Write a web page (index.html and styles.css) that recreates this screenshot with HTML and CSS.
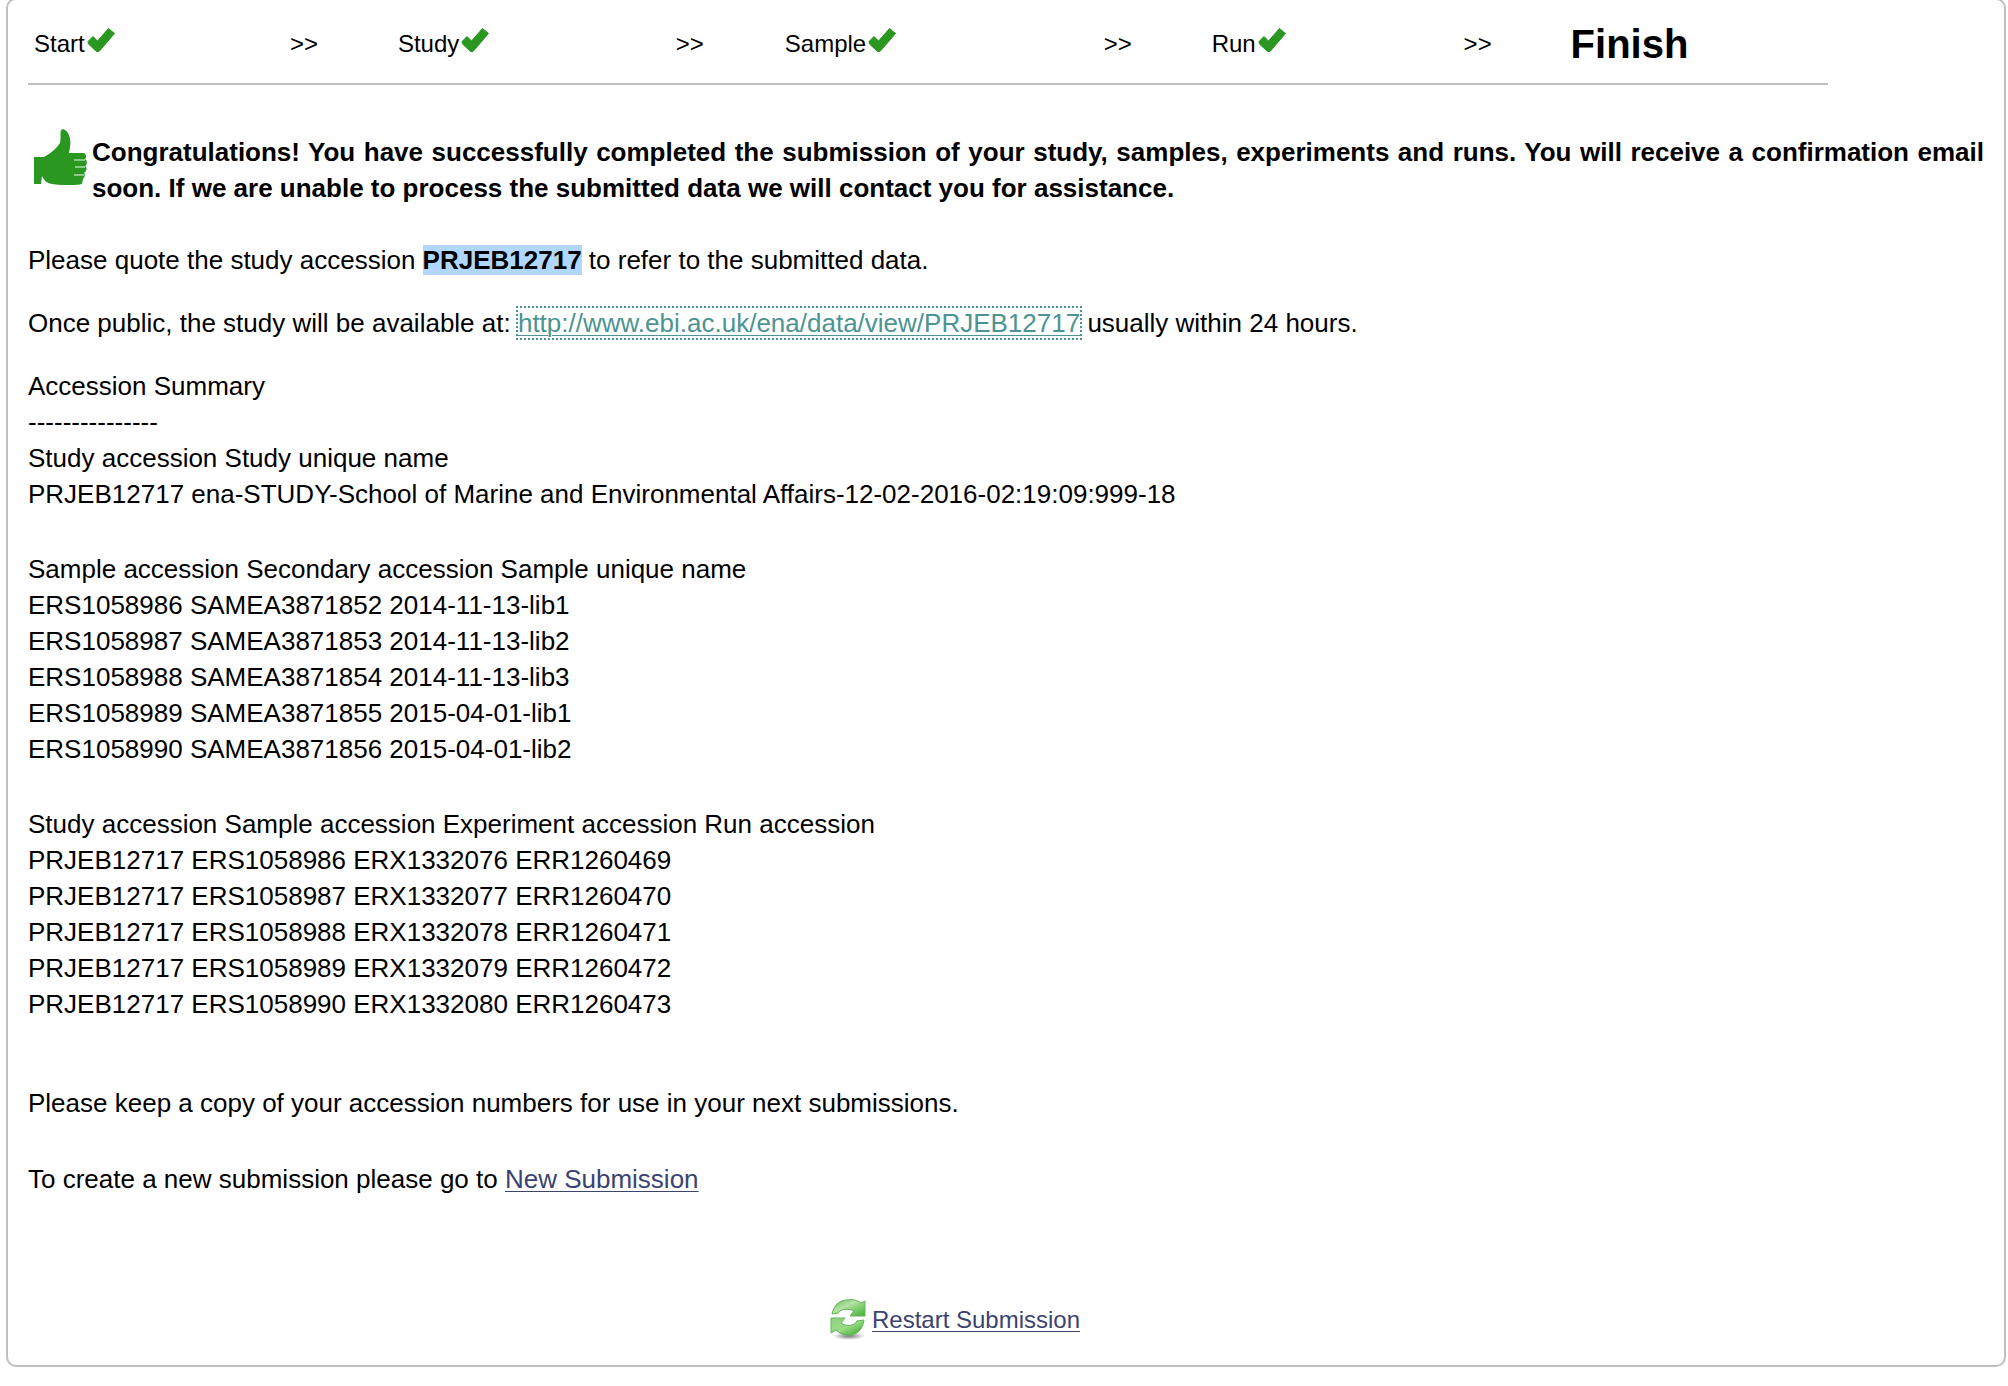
FILE: index.html
```html
<!DOCTYPE html>
<html lang="en">
<head>
<meta charset="utf-8">
<title>Submission complete</title>
<link rel="stylesheet" href="styles.css">
</head>
<body>
<svg class="sprite" aria-hidden="true">
  <symbol id="tick" viewBox="0 0 28 24">
    <path d="M1 13.500 L6 8.500 L10.500 13 L21.500 0.500 L27.500 5.500 L12 23.500 H9.500 L1.500 16 Z" fill="#2a9720" stroke="#2a9720" stroke-linejoin="round"/>
  </symbol>
</svg>
<main class="panel">
  <ol class="steps">
    <li>Start<svg class="tick" role="img" aria-label="done"><use href="#tick"/></svg></li>
    <li aria-hidden="true">&gt;&gt;</li>
    <li>Study<svg class="tick" role="img" aria-label="done"><use href="#tick"/></svg></li>
    <li aria-hidden="true">&gt;&gt;</li>
    <li>Sample<svg class="tick" role="img" aria-label="done"><use href="#tick"/></svg></li>
    <li aria-hidden="true">&gt;&gt;</li>
    <li>Run<svg class="tick" role="img" aria-label="done"><use href="#tick"/></svg></li>
    <li aria-hidden="true">&gt;&gt;</li>
    <li class="current" aria-current="step">Finish</li>
  </ol>

  <div class="congrats">
    <svg class="thumb" viewBox="0 0 53 56" aria-hidden="true">
      <path d="M0 28 H10 C17 24 22 20 26 14 C27 10 26 4 27 1 C29 -1 32 1 34 4 C36 8 37 12 36 18 L35 24 H49 C52 24 53 28 51 30 C54 32 53 36 51 37 C54 39 52 43 50 44 C52 46 50 49 49 50 L48 55 C38 57 23 56 18 55 C12 54 10 51 8 47 L7 55 H0 Z" fill="#2a9720"/>
      <path d="M40 31 H51 M41 38 H51 M40 46 H50" stroke="#8cc888" stroke-width="2"/>
    </svg>
    <p>Congratulations! You have successfully completed the submission of your study, samples, experiments and runs. You will receive a confirmation email soon. If we are unable to process the submitted data we will contact you for assistance.</p>
  </div>

  <p class="quote">Please quote the study accession <mark>PRJEB12717</mark> to refer to the submitted data.</p>
  <p class="public">Once public, the study will be available at: <a class="study-link" href="http://www.ebi.ac.uk/ena/data/view/PRJEB12717">http://www.ebi.ac.uk/ena/data/view/PRJEB12717</a> usually within 24 hours.</p>

  <section class="summary">
    <p>Accession Summary<br>
    ---------------<br>
    Study accession Study unique name<br>
    PRJEB12717 ena-STUDY-School of Marine and Environmental Affairs-12-02-2016-02:19:09:999-18</p>
    <p>Sample accession Secondary accession Sample unique name<br>
    ERS1058986 SAMEA3871852 2014-11-13-lib1<br>
    ERS1058987 SAMEA3871853 2014-11-13-lib2<br>
    ERS1058988 SAMEA3871854 2014-11-13-lib3<br>
    ERS1058989 SAMEA3871855 2015-04-01-lib1<br>
    ERS1058990 SAMEA3871856 2015-04-01-lib2</p>
    <p>Study accession Sample accession Experiment accession Run accession<br>
    PRJEB12717 ERS1058986 ERX1332076 ERR1260469<br>
    PRJEB12717 ERS1058987 ERX1332077 ERR1260470<br>
    PRJEB12717 ERS1058988 ERX1332078 ERR1260471<br>
    PRJEB12717 ERS1058989 ERX1332079 ERR1260472<br>
    PRJEB12717 ERS1058990 ERX1332080 ERR1260473</p>
  </section>

  <p class="keep">Please keep a copy of your accession numbers for use in your next submissions.</p>
  <p class="create">To create a new submission please go to <a href="#new">New Submission</a></p>

  <div class="restart">
    <svg class="refresh" viewBox="0 0 36 42" aria-hidden="true">
      <defs>
        <linearGradient id="upper" x1="0" y1="0" x2="1" y2="1">
          <stop offset="0" stop-color="#5fb558"/><stop offset=".4" stop-color="#b5e3a3"/><stop offset="1" stop-color="#3fae2c"/>
        </linearGradient>
        <linearGradient id="lower" x1="0" y1="0" x2="1" y2="1">
          <stop offset="0" stop-color="#8fd183"/><stop offset=".5" stop-color="#9bdc88"/><stop offset="1" stop-color="#2fa31f"/>
        </linearGradient>
        <radialGradient id="shade">
          <stop offset="0" stop-color="#555" stop-opacity=".8"/><stop offset="1" stop-color="#555" stop-opacity="0"/>
        </radialGradient>
      </defs>
      <ellipse cx="19" cy="37" rx="16" ry="4" fill="url(#shade)"/>
      <path d="M2 15 C4 5 11 1 17 1 C23 0 27 1 31 4 L35 2 V17 H20 L24 12 C18 9 11 10 8 14 Z" fill="url(#upper)" stroke="#62b45a"/>
      <path d="M1 19 H15 L11 24 C17 28 24 27 27 22 L34 21 C33 31 26 36 19 36 C13 36 9 34 6 31 L1 34 Z" fill="url(#lower)" stroke="#62b45a"/>
    </svg>
    <a href="#restart">Restart Submission</a>
  </div>
</main>
</body>
</html>
```
FILE: styles.css
```css
* { box-sizing: border-box; }

body {
  margin: 0;
  background: #fff;
  color: #000;
  font: 26px/36px "Liberation Sans", Arial, sans-serif;
}

p, ol { margin: 0; padding: 0; }

a { color: #3b4371; text-decoration-thickness: 1px; text-underline-offset: 3px; }

.sprite { position: absolute; width: 0; height: 0; }

.panel {
  margin: -2px 2px 18px 6px;
  padding: 20px 20px 24px;
  border: 2px solid #bfbfbf;
  border-radius: 10px;
}

/* progress bar */
.steps {
  display: grid;
  grid-template-columns: 256fr 108fr 278fr 109fr 319fr 108fr 252fr 107fr 257fr;
  align-items: start;
  width: 92%;
  height: 65px;
  padding-left: 6px;
  border-bottom: 2px solid #bfbfbf;
  font-size: 24px;
  line-height: 48px;
  list-style: none;
}

.steps li { white-space: nowrap; }
.steps .current { font-size: 40px; font-weight: bold; }

.tick { width: 28px; height: 24px; margin-left: 2px; vertical-align: baseline; }

.congrats {
  display: flex;
  gap: 5px;
  margin-top: 44px;
  padding-left: 6px;
  font-weight: bold;
  text-align: justify;
}

.congrats p { flex: 1; padding-top: 5px; }
.thumb { flex: none; width: 53px; height: 56px; }

.quote { margin-top: 36px; }
.public { margin-top: 27px; }

mark { background: #b2d7ff; color: #000; font-weight: bold; }

.study-link { color: #4b9490; outline: 2px dotted #4b9490; }

.summary {
  display: grid;
  gap: 39px;
  margin-top: 27px;
}

.keep { margin-top: 63px; }
.create { margin-top: 40px; }

.restart {
  display: flex;
  align-items: center;
  gap: 6px;
  margin-top: 102px;
  padding-left: 41%;
  font-size: 24px;
}

.refresh { flex: none; width: 36px; height: 42px; }
```
